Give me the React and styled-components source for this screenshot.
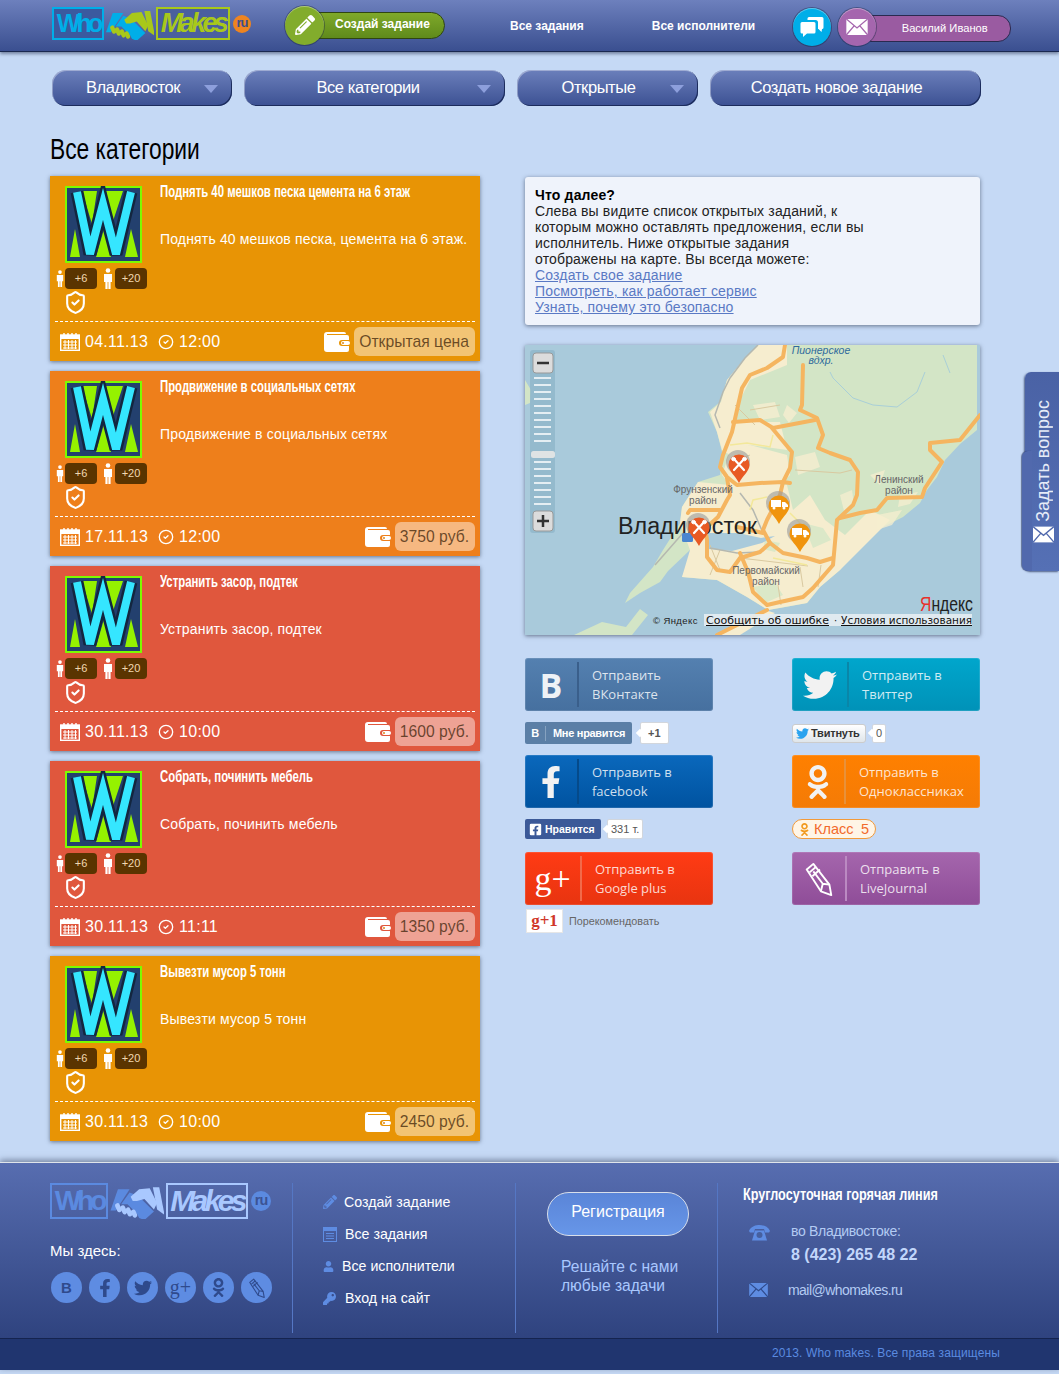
import React from 'react';
import styled, { createGlobalStyle } from 'styled-components';
import { CircleCheck, ShieldCheck } from 'lucide-react';
import {
  FaFacebookF,
  FaKey,
  FaOdnoklassniki,
  FaPencilAlt,
  FaTwitter,
  FaUser,
  FaFacebookSquare,
} from 'react-icons/fa';

const GlobalStyle = createGlobalStyle`
  html, body {
    margin: 0;
    padding: 0;
    background: #c5d9f5;
    font-family: "Liberation Sans", Arial, sans-serif;
  }
  * { box-sizing: border-box; }
`;

const Page = styled.div`
  position: relative;
  width: 1059px;
  height: 1374px;
  overflow: hidden;
  background: #c5d9f5;
`;

// no narrow face is installed, so the PT Sans Narrow headings are squeezed
const Narrow = styled.span`
  display: inline-block;
  transform: scaleX(${(p) => p.$x});
  transform-origin: left center;
  white-space: nowrap;
`;

/* ---------- logo ---------- */

const LogoRow = styled.div`
  display: flex;
  align-items: center;
  gap: ${(p) => p.$gap}px;
  height: ${(p) => p.$h}px;
`;

const LogoBox = styled.div`
  width: ${(p) => p.$w}px;
  height: ${(p) => p.$h}px;
  border: 2px solid ${(p) => p.$color};
  background: ${(p) => p.$bg};
  color: ${(p) => p.$color};
  font-size: ${(p) => p.$size}px;
  font-weight: bold;
  font-style: ${(p) => (p.$italic ? 'italic' : 'normal')};
  letter-spacing: ${(p) => p.$ls}px;
  line-height: ${(p) => p.$h - 5}px;
  text-align: center;
  white-space: nowrap;
`;

const LogoRu = styled.div`
  width: ${(p) => p.$d}px;
  height: ${(p) => p.$d}px;
  margin-left: 1px;
  border-radius: 50%;
  background: ${(p) => p.$bg};
  color: ${(p) => p.$color};
  font-size: ${(p) => p.$d * 0.72}px;
  font-weight: bold;
  letter-spacing: -1px;
  line-height: ${(p) => p.$d - 2}px;
  text-align: center;
`;

const Handshake = ({ left, right, w, h }) => (
  <svg width={w} height={h} viewBox="6 5 50 34">
    <path d="M13 11h11L11 31H6z" fill={left} />
    <path d="M24 14l8 3 15 15-9 8-5-2-2-4-9-9-6 0z" fill={left} />
    <path d="M25 18l8-7 10-1 7 14-3 6-9-10-7 2-4 0z" fill={right} />
    <path d="M46 9h6l5 26-7-5z" fill={right} />
    <g fill={right}>
      <rect x="11" y="24" width="4.5" height="9" rx="2.2" transform="rotate(-25 13 28)" />
      <rect x="16" y="26" width="4.5" height="9" rx="2.2" transform="rotate(-25 18 30)" />
      <rect x="21" y="28" width="4.5" height="9" rx="2.2" transform="rotate(-25 23 32)" />
      <rect x="26" y="30" width="4.5" height="8" rx="2.2" transform="rotate(-25 28 34)" />
    </g>
  </svg>
);

const HeaderLogo = () => (
  <LogoRow $gap={2} $h={33}>
    <LogoBox $w={52} $h={33} $size={25} $ls={-3.8} $color="#00aee8" $bg="#3b5a9f">Who</LogoBox>
    <Handshake left="#00aee8" right="#a8c81a" w={48} h={33} />
    <LogoBox $w={74} $h={33} $size={27} $ls={-3.6} $italic $color="#a8c81a" $bg="#4a5f9f">Makes</LogoBox>
    <LogoRu $d={18} $bg="#ee8420" $color="#3a4f8e">ru</LogoRu>
  </LogoRow>
);

const FooterLogo = () => (
  <LogoRow $gap={2} $h={36}>
    <LogoBox $w={58} $h={36} $size={28} $ls={-4} $color="#5b8ae0" $bg="transparent">Who</LogoBox>
    <Handshake left="#5b8ae0" right="#a9c8ff" w={54} h={36} />
    <LogoBox $w={82} $h={36} $size={30} $ls={-3.6} $italic $color="#a9c8ff" $bg="transparent">Makes</LogoBox>
    <LogoRu $d={20} $bg="#5b8ae0" $color="#3c5394">ru</LogoRu>
  </LogoRow>
);

/* ---------- header ---------- */

const Header = styled.header`
  display: flex;
  align-items: flex-start;
  height: 52px;
  padding: 7px 0 0 52px;
  background: linear-gradient(#6d80bd, #3a4f90);
  border-bottom: 1px solid #1a2950;
  box-shadow: 0 2px 3px rgba(40, 50, 80, 0.5);
`;

const CreateTask = styled.div`
  display: flex;
  align-items: center;
  width: 160px;
  height: 40px;
  margin: -2px 0 0 34px;
`;

const RoundIcon = styled.div`
  position: relative;
  z-index: 1;
  display: flex;
  flex: none;
  align-items: center;
  justify-content: center;
  width: ${(p) => p.$d}px;
  height: ${(p) => p.$d}px;
  border-radius: 50%;
  background: ${(p) => p.$bg};
  color: #fff;
  box-shadow: 0 0 0 1px rgba(30, 40, 70, 0.45), inset 0 1px 0 rgba(255, 255, 255, 0.35);
`;

const CreateLabel = styled.div`
  flex: 1;
  height: 27px;
  margin-left: -10px;
  padding-left: 20px;
  border: 1px solid #2f4512;
  border-radius: 0 14px 14px 0;
  background: linear-gradient(#7fa92a, #5f8a1b);
  color: #fff;
  font-size: 12px;
  font-weight: bold;
  line-height: 23px;
`;

const NavLink = styled.a`
  margin: 12px 0 0 ${(p) => p.$ml}px;
  color: #fff;
  font-size: 12px;
  font-weight: bold;
  line-height: 14px;
  white-space: nowrap;
`;

const UserBlock = styled.div`
  display: flex;
  align-items: flex-start;
  margin: 1px 0 0 ${(p) => p.$ml}px;
`;

const UserName = styled.div`
  width: 141px;
  height: 27px;
  margin: 7px 0 0 -6px;
  padding-left: 8px;
  border: 1px solid #2a2a50;
  border-radius: 0 13px 13px 0;
  background: #9a5ba1;
  color: #fff;
  font-size: 11.2px;
  line-height: 25px;
  text-align: center;
`;

/* ---------- filters ---------- */

const Filters = styled.div`
  display: flex;
  gap: 12px;
  padding: 18px 0 0 52px;
`;

const FilterButton = styled.div`
  position: relative;
  width: ${(p) => p.$w}px;
  height: 36px;
  padding-right: ${(p) => p.$pr}px;
  border-radius: 14px;
  background: linear-gradient(#6b7fbb, #3c5193);
  box-shadow: inset -1px -1px 0 #1c2c5c, inset 1px 1px 0 rgba(255, 255, 255, 0.35);
  color: #fff;
  font-size: 16.5px;
  letter-spacing: -0.4px;
  line-height: 35px;
  text-align: center;
  &::after {
    content: '';
    display: ${(p) => (p.$arrow ? 'block' : 'none')};
    position: absolute;
    top: 15px;
    right: 14px;
    border-top: 8px solid #8d9fdc;
    border-left: 7px solid transparent;
    border-right: 7px solid transparent;
  }
`;

const Title = styled.h1`
  margin: 24px 0 0 50px;
  color: #000;
  font-size: 30px;
  font-weight: normal;
  line-height: 38px;
`;

const Columns = styled.div`
  display: flex;
  gap: 45px;
  margin-top: 8px;
  padding-left: 50px;
`;

/* ---------- task cards ---------- */

const TaskList = styled.div`
  display: flex;
  flex-direction: column;
  gap: 10px;
  width: 430px;
`;

const Card = styled.article`
  height: 185px;
  background: ${(p) => p.$bg};
  box-shadow: 0 1px 4px rgba(40, 50, 70, 0.6);
`;

const CardBody = styled.div`
  display: flex;
  height: 145px;
`;

const CardSide = styled.div`
  flex: none;
  width: 110px;
  padding: 10px 0 0 6px;
`;

const AvatarFrame = styled.div`
  width: 77px;
  height: 77px;
  margin-left: 9px;
`;

const Badges = styled.div`
  display: flex;
  align-items: center;
  margin-top: 5px;
`;

const Badge = styled.span`
  width: 32px;
  height: 21px;
  margin: 0 ${(p) => p.$mr}px 0 1px;
  border-radius: 4px;
  background: #5a3400;
  color: #f2d9b0;
  font-size: 11px;
  line-height: 21px;
  text-align: center;
`;

const Shield = styled.div`
  height: 25px;
  margin: 1px 0 0 7px;
  color: #fff;
`;

const CardText = styled.div`
  flex: 1;
  padding-top: 7px;
  color: #fff;
`;

const CardTitle = styled.h3`
  margin: 0;
  font-size: 16px;
  font-weight: bold;
  line-height: 18px;
`;

const CardDesc = styled.p`
  margin: 29px 0 0;
  font-size: 14px;
  letter-spacing: 0.16px;
  line-height: 18px;
`;

const CardRule = styled.div`
  margin: 0 5px;
  border-top: 1px dashed #fff;
`;

const CardFooter = styled.div`
  display: flex;
  align-items: center;
  height: 39px;
  padding: 0 5px 0 10px;
  color: #fff;
  font-size: 16px;
`;

const DateText = styled.span`
  margin: 0 ${(p) => p.$mr}px 0 5px;
  letter-spacing: 0.25px;
`;

const Price = styled.span`
  display: block;
  height: 29px;
  margin-left: 4px;
  padding: 0 6px 0 5px;
  border-radius: 6px;
  background: rgba(255, 255, 255, 0.45);
  color: rgba(60, 35, 10, 0.75);
  font-size: 15.7px;
  line-height: 29px;
`;

const Spacer = styled.span`
  flex: 1;
`;

const PersonIcon = ({ w }) => (
  <svg width={w} height="21" viewBox="0 0 10 21" fill="#fff">
    <circle cx="5" cy="2.5" r="2.3" />
    <path d="M1 6h8v8H7.6v7H5.4v-7h-.8v7H2.4v-7H1z" />
  </svg>
);

const Calendar = () => (
  <svg width="20" height="18" viewBox="0 0 20 18">
    <rect x="0.7" y="2" width="18.6" height="15.3" fill="none" stroke="#fff" strokeWidth="1.4" />
    <rect x="0.7" y="2" width="18.6" height="4" fill="#fff" />
    <path d="M4 0v3M8 0v3M12 0v3M16 0v3" stroke="#fff" strokeWidth="1.4" />
    <path d="M3 9h14M3 12h14M3 15h14M5 7v9M8.5 7v9M12 7v9M15.5 7v9" stroke="#fff" strokeWidth="1" />
  </svg>
);

const Wallet = () => (
  <svg width="26" height="20" viewBox="0 0 26 20">
    <path d="M3 0h17a2 2 0 0 1 2 2H3v1h20a2 2 0 0 1 2 2v3h-7a3 3 0 0 0 0 6h7v4a2 2 0 0 1-2 2H3a3 3 0 0 1-3-3V3a3 3 0 0 1 3-3z" fill="#fff" />
    <rect x="17" y="9" width="9" height="4" rx="2" fill="#fff" />
    <circle cx="19" cy="11" r="1" fill="#d98a20" />
  </svg>
);

const Avatar = () => (
  <svg width="77" height="77" viewBox="0 0 77 77">
    <rect width="77" height="77" fill="#7dfb00" />
    <rect x="2" y="2" width="73" height="73" fill="#23406e" />
    <g fill="#95f200">
      <path d="M17 5h15l-5 33zM41 5h17l-11 33zM5 71h10l-5-28zM31 71h15l-7-28zM60 71h13l-7-28z" />
    </g>
    <path d="M12 6l13 62 13-50 13 50L66 6" fill="none" stroke="#13263f" strokeWidth="13" />
    <path d="M12 6l13 62 13-50 13 50L66 6" fill="none" stroke="#35e6ff" strokeWidth="8" />
  </svg>
);

const TaskCard = ({ bg, title, text, date, time, price }) => (
  <Card $bg={bg}>
    <CardBody>
      <CardSide>
        <AvatarFrame><Avatar /></AvatarFrame>
        <Badges>
          <PersonIcon w={8} />
          <Badge $mr={5}>+6</Badge>
          <PersonIcon w={12} />
          <Badge $mr={0}>+20</Badge>
        </Badges>
        <Shield><ShieldCheck size={25} strokeWidth={2} /></Shield>
      </CardSide>
      <CardText>
        <CardTitle><Narrow $x={0.71}>{title}</Narrow></CardTitle>
        <CardDesc>{text}</CardDesc>
      </CardText>
    </CardBody>
    <CardRule />
    <CardFooter>
      <Calendar />
      <DateText $mr={10}>{date}</DateText>
      <CircleCheck size={16} strokeWidth={2} />
      <DateText $mr={0}>{time}</DateText>
      <Spacer />
      <Wallet />
      <Price>{price}</Price>
    </CardFooter>
  </Card>
);

const TASKS = [
  { bg: '#e89405', title: 'Поднять 40 мешков песка цемента на 6 этаж', text: 'Поднять 40 мешков песка, цемента на 6 этаж.', date: '04.11.13', time: '12:00', price: 'Открытая цена' },
  { bg: '#ee7f1b', title: 'Продвижение в социальных сетях', text: 'Продвижение в социальных сетях', date: '17.11.13', time: '12:00', price: '3750 руб.' },
  { bg: '#e0573d', title: 'Устранить засор, подтек', text: 'Устранить засор, подтек', date: '30.11.13', time: '10:00', price: '1600 руб.' },
  { bg: '#e0573d', title: 'Собрать, починить мебель', text: 'Собрать, починить мебель', date: '30.11.13', time: '11:11', price: '1350 руб.' },
  { bg: '#e89405', title: 'Вывезти мусор 5 тонн', text: 'Вывезти мусор 5 тонн', date: '30.11.13', time: '10:00', price: '2450 руб.' },
];

/* ---------- right column ---------- */

const Aside = styled.div`
  width: 455px;
  margin-top: 1px;
`;

const InfoBox = styled.div`
  height: 148px;
  padding: 10px 10px 0;
  border-radius: 3px;
  background: #eff3fb;
  box-shadow: 0 1px 4px rgba(40, 50, 70, 0.6);
  color: #222;
  font-size: 14px;
  letter-spacing: 0.16px;
  line-height: 16px;
  b {
    color: #000;
  }
  a {
    display: block;
    color: #5a79c4;
    text-decoration: underline;
  }
`;

const MapFrame = styled.div`
  width: 455px;
  height: 290px;
  margin-top: 20px;
  background: #a9cadb;
  box-shadow: 0 1px 4px rgba(40, 50, 70, 0.6);
  svg {
    display: block;
  }
`;

const Pin = ({ x, y, fill, kind }) => (
  <g transform={`translate(${x} ${y})`}>
    <circle cx="-1" cy="0" r="12" fill="#9a9a9a" opacity="0.6" />
    <path d="M-10.5 3a10.5 10.5 0 1 1 21 0c0 6-7 11-10.5 18C-3.5 14-10.5 9-10.5 3z" fill={fill} />
    {kind === 'tools' ? (
      <g stroke="#fff" strokeWidth="2.2" strokeLinecap="round">
        <path d="M-5-3L5 8M5-3L-5 8" />
        <circle cx="5.5" cy="-3" r="1.8" fill="#fff" strokeWidth="1" />
        <circle cx="-5.5" cy="-3" r="1.8" fill="#fff" strokeWidth="1" />
      </g>
    ) : (
      <g fill="#fff">
        <rect x="-8" y="-3" width="10" height="7" />
        <path d="M3-1h3l3 3v2H3z" />
        <circle cx="-5" cy="5" r="1.5" />
        <circle cx="5" cy="5" r="1.5" />
      </g>
    )}
  </g>
);

const ROADS = [
  'M260 0l-2 12-16 11-17 7-8 13-10 44-9 23-3 12 7 10 10 8 23-2 23-1 7 1',
  'M278 20l-1 40-2 5 17 8 6 17-5 13 12 5 20 7 8 12-1 23-4 10-16 15-4 45-20 23-10 9-23 5-13 3-14-13-5-20-8-19',
  'M455 70l-20 25-30 3v7l12 12-17 26-3 9-35 1-10 12-17 3-20 5',
  'M208 77l27-2 13 8 42-8',
  'M247 83l20 24-2 16-7 14-3 13-13 25-4 10 7 13-10 9-20 6-10 14-13-2-10-13v-17l-2-13',
  'M202 133l3 17-3 5-9 17-11 10',
  'M163 168l2-3h30M212 182l26 6M245 198l13 10 24 5 13 4 13-4M192 290l26-13 24-12',
];

const THIN_ROADS = [
  'M185 200l10 25M215 213l68 8M253 240l3 20M225 225l3 20M275 222l3 20M296 220l-3 22M210 60l20 20M225 65l30-5',
  'M270 125l45 3 12-3M205 118l20-8M195 205l-10 25',
];

const MapView = () => {
  const ticks = [];
  for (let i = 0; i < 19; i++) {
    if (i !== 10) ticks.push(33 + i * 7);
  }
  return (
    <svg width="455" height="290" viewBox="0 0 455 290" fontFamily="Liberation Sans, sans-serif">
      <path d="M0 35l6 10-1 13-5 2zM49 290l28-13 24 5 14-18 8 6-16 20z" fill="#d3e5c6" />
      <path
        d="M233 0L220 13l-18 22-7 22-12 10 9 20 5 20-2 23-22 7-16 25-2 16-17 27-10 17-23 26-5 10 15-10 20-11 8-11 22-21 3 0-8 20-3 7 35 3 30 17 21 13 12-2 27-5 13-16 20-17 13-17 24-23 26-13 17-14 7-13 10-13 8-17 15-16 17-14V0z"
        fill="#d3e5c6"
      />
      <path d="M190 290l50-25 10 3-35 22z" fill="#f6edcf" />
      <g fill="#f6edcf">
        <path d="M233 0L220 13l-18 22-6 22-11 10 7 20 5 18 8 5 5-25 5-30 10-20 37-15V0z" />
        <path d="M205 77h50l7 28-37-5-20 10z" />
        <path d="M205 107l20-7 37 10 3 20-10 10h-50l-8-10z" />
        <path d="M228 60l22-3 5 15-20 3zM262 60l10 8-8 10-6-8zM270 112l20-5 5 15-22 8z" opacity="0.8" />
        <path d="M173 137l32 3h57l6 25 17-15 15 25 20 15 25-25 20 10-25 25-25 25-20 17-13 16-39 7-21-13-30-17-35-3 8-27-10-27 2-16z" />
        <path d="M352 170l25-5-10 15-15 5zM375 150l18-3-8 12-12 3zM315 150l12-5 2 15-10 6zM345 130l15-5-5 15z" opacity="0.75" />
      </g>
      <path d="M228 242l22-4 8 12-18 8zM278 178l20 5 8 12-18 8zM240 195l15 3-5 9-12-3z" fill="#dbe8c8" />
      <path d="M183 188l30 0 23 5 14-2 -13 7-30 8-24-2z" fill="#a9cadb" />

      <g fill="none" stroke="#a9cfd8" strokeWidth="1">
        <path d="M305 27l3 6 20 20 20 7 24 2 20-15 8-20M418 10l7 18" />
      </g>
      <g fill="none" stroke="#d9c9a0" strokeWidth="1">
        {THIN_ROADS.map((d) => <path key={d} d={d} />)}
      </g>
      <g fill="none" stroke="#b5b8b0" strokeWidth="1.5">
        <path d="M233 0L220 13 205 33l-7 14-8 23 5 13M130 220l28-32M185 203l27 5 23-1M215 148l13 17 10 23" />
      </g>
      <g fill="none" stroke="#f3e89a" strokeWidth="1.5">
        <path d="M205 100l17-2 23 4 3-12M225 165l3-10 14-3M265 168l10 10M248 213l34 7" />
      </g>
      <g fill="none" stroke="#f5b560" strokeWidth="4" strokeLinejoin="round" strokeLinecap="round">
        {ROADS.map((d) => <path key={d} d={d} />)}
      </g>

      <g fill="#2f6b9c" fontSize="10.5" fontStyle="italic" textAnchor="middle">
        <text x="296" y="9">Пионерское</text>
        <text x="296" y="19">вдхр.</text>
      </g>
      <g fill="#666" fontSize="10" textAnchor="middle">
        <text x="178" y="148">Фрунзенский</text>
        <text x="178" y="159">район</text>
        <text x="241" y="229">Первомайский</text>
        <text x="241" y="240">район</text>
        <text x="374" y="138">Ленинский</text>
        <text x="374" y="149">район</text>
      </g>
      <text x="93" y="189" fontSize="23" fill="#222" textLength="139" lengthAdjust="spacingAndGlyphs">Владивосток</text>
      <rect x="157" y="188" width="11" height="9" rx="1.5" fill="#4a85d0" />

      <Pin x={214} y={117} fill="#e85a24" kind="tools" />
      <Pin x={174} y={180} fill="#e85a24" kind="tools" />
      <Pin x={254} y={158} fill="#f0940d" kind="truck" />
      <Pin x={275} y={186} fill="#f0940d" kind="truck" />

      <rect x="5" y="5" width="25" height="183" rx="3" fill="#8eb4c8" opacity="0.75" />
      <g stroke="#fff" strokeWidth="1.5">
        {ticks.map((y) => (
          <path key={y} d={`M9 ${y}h17`} />
        ))}
      </g>
      <rect x="6" y="106" width="24" height="7" rx="2.5" fill="#dfe3e4" />
      <rect x="8" y="8" width="20" height="20" rx="3" fill="#dcdcdc" stroke="#999" />
      <path d="M12 18h12" stroke="#333" strokeWidth="2.5" />
      <rect x="8" y="166" width="20" height="20" rx="3" fill="#dcdcdc" stroke="#999" />
      <path d="M12 176h12M18 170v12" stroke="#333" strokeWidth="2.5" />

      <text transform="translate(395 266) scale(0.75 1)" fontSize="21" fill="#222">
        <tspan fill="#e8312a">Я</tspan>ндекс
      </text>
      <rect x="179" y="269" width="268" height="12" fill="#e6edf2" opacity="0.9" />
      <text x="128" y="279" fontSize="9.5" letterSpacing="0.4" fill="#222">© Яндекс</text>
      <g fontSize="10" fill="#111" fontFamily="DejaVu Sans, sans-serif">
        <text x="181" y="279" textLength="123" lengthAdjust="spacingAndGlyphs" textDecoration="underline">Сообщить об ошибке</text>
        <text x="309" y="279">·</text>
        <text x="316" y="279" textLength="131" lengthAdjust="spacingAndGlyphs" textDecoration="underline">Условия использования</text>
      </g>
    </svg>
  );
};

const ShareGrid = styled.div`
  display: grid;
  grid-template-columns: 188px 188px;
  grid-auto-rows: 97px;
  column-gap: 79px;
  margin-top: 23px;
`;

const ShareCell = styled.div`
  display: flex;
  flex-direction: column;
`;

const ShareButton = styled.a`
  display: flex;
  flex: none;
  align-items: center;
  height: 53px;
  border-radius: 3px;
  background: linear-gradient(${(p) => p.$from}, ${(p) => p.$to});
  box-shadow: inset 0 0 0 1px rgba(255, 255, 255, 0.12);
  color: rgba(255, 255, 255, 0.82);
  font-family: "Open Sans", sans-serif;
  font-size: 13px;
  line-height: 19px;
`;

const ShareIcon = styled.div`
  display: flex;
  flex: none;
  align-items: center;
  justify-content: center;
  width: ${(p) => p.$w}px;
  height: 45px;
  margin-right: 13px;
  border-right: 2px solid ${(p) => p.$line};
  color: #f2f2f2;
`;

const VkGlyph = styled.span`
  color: #eef2f6;
  font-size: ${(p) => p.$size}px;
  font-weight: bold;
  line-height: 1;
`;

const GPlusGlyph = styled.span`
  color: #fff;
  font-family: "Liberation Serif", serif;
  font-size: ${(p) => p.$size}px;
  line-height: 1;
  white-space: nowrap;
`;

const WidgetRow = styled.div`
  display: flex;
  align-items: center;
  height: 24px;
  margin-top: ${(p) => p.$mt}px;
`;

const VkLike = styled.div`
  display: flex;
  align-items: center;
  width: 107px;
  height: 22px;
  border-radius: 2px;
  background: #5b7fa6;
  color: #fff;
  font-size: 11px;
  font-weight: bold;
  letter-spacing: -0.3px;
  b {
    width: 21px;
    margin-right: 7px;
    border-right: 1px solid #86a2c0;
    font-size: 11px;
    line-height: 15px;
    text-align: center;
  }
`;

const Count = styled.span`
  position: relative;
  height: ${(p) => p.$h}px;
  margin-left: ${(p) => p.$ml}px;
  padding: 0 ${(p) => p.$pad}px;
  border: 1px solid #d2d6dc;
  border-radius: 2px;
  background: #fff;
  color: #555;
  font-size: 11px;
  font-weight: ${(p) => (p.$bold ? 'bold' : 'normal')};
  line-height: ${(p) => p.$h - 2}px;
  &::before {
    content: '';
    position: absolute;
    top: 50%;
    left: -4px;
    width: 6px;
    height: 6px;
    margin-top: -3px;
    background: #fff;
    transform: rotate(45deg);
  }
`;

const TweetButton = styled.div`
  display: flex;
  align-items: center;
  gap: 2px;
  width: 74px;
  height: 19px;
  padding-left: 3px;
  border: 1px solid #ccc;
  border-radius: 3px;
  background: linear-gradient(#fff, #dfe5ea);
  color: #333;
  font-size: 11px;
  font-weight: bold;
  letter-spacing: -0.2px;
`;

const FbLike = styled.div`
  display: flex;
  align-items: center;
  gap: 3px;
  width: 76px;
  height: 20px;
  padding-left: 4px;
  border-radius: 2px;
  background: #3b5998;
  color: #fff;
  font-size: 10.5px;
  font-weight: bold;
`;

const OkClass = styled.div`
  display: flex;
  align-items: center;
  gap: 3px;
  width: 84px;
  height: 20px;
  padding: 0 6px 0 5px;
  border: 1px solid #f29a3a;
  border-radius: 10px;
  background: #fff5e6;
  color: #f26a2c;
  font-size: 14.5px;
  em {
    margin-left: auto;
    font-style: normal;
  }
`;

const GPlusOne = styled.div`
  width: 37px;
  height: 24px;
  margin-left: 1px;
  border: 1px solid #e6e6e6;
  background: #fff;
  color: #d0372a;
  font-family: "Liberation Serif", serif;
  font-size: 17px;
  font-weight: bold;
  line-height: 21px;
  text-align: center;
`;

const Recommend = styled.span`
  margin-left: 6px;
  color: #666;
  font-size: 10.8px;
`;

const LjIcon = ({ size, color }) => (
  <svg width={size} height={size} viewBox="0 0 30 36" fill="none" stroke={color} strokeWidth="2" strokeLinejoin="round">
    <path d="M2 8l7-6 17 22 2 11-11-4z" />
    <path d="M5 11l7-6M8 15l8-7M17 31l2-8 7 1M19 23l-10-13" />
  </svg>
);

/* ---------- side tab ---------- */

const SideTab = styled.div`
  position: absolute;
  top: 372px;
  right: 0;
  width: 34px;
  height: 199px;
  border-radius: 6px 0 0 6px;
  background: linear-gradient(#4a62a5, #5570b5);
  box-shadow: -1px 1px 2px rgba(30, 45, 90, 0.7);
  &::before {
    content: '';
    position: absolute;
    top: 79px;
    left: -3px;
    width: 10px;
    height: 120px;
    border-radius: 6px 0 0 6px;
    background: #5169ad;
    box-shadow: -1px 0 1px rgba(30, 45, 90, 0.6);
  }
`;

const SideLabel = styled.div`
  position: absolute;
  top: 28px;
  left: 7px;
  color: #e6ecf8;
  font-size: 18px;
  line-height: 22px;
  white-space: nowrap;
  writing-mode: vertical-rl;
  transform: rotate(180deg);
`;

const SideMail = styled.div`
  position: absolute;
  bottom: 24px;
  left: 8px;
`;

const Envelope = ({ w, h, bg, line }) => (
  <svg width={w} height={h} viewBox="0 0 24 18">
    <rect width="24" height="18" fill={bg} />
    <path d="M0 0l12 10L24 0M0 18l9-10.5M24 18l-9-10.5" fill="none" stroke={line} strokeWidth="1.5" />
  </svg>
);

/* ---------- footer ---------- */

const Footer = styled.footer`
  position: absolute;
  top: 1162px;
  left: 0;
  width: 100%;
  border-top: 1px solid #dfe4ea;
  box-shadow: 0 -2px 6px rgba(50, 60, 90, 0.55);
`;

const FooterMain = styled.div`
  display: flex;
  height: 176px;
  background: linear-gradient(#576db0, #2f437f);
  border-bottom: 1px solid #15244f;
`;

const FooterCol = styled.div`
  flex: none;
  width: ${(p) => p.$w}px;
  margin: ${(p) => (p.$first ? '0' : '20px')} 0 ${(p) => (p.$first ? '0' : '5px')};
  padding: ${(p) => p.$pad};
  border-left: ${(p) => (p.$first ? 'none' : '1px solid #5577c4')};
  color: #fff;
`;

const WeAreHere = styled.div`
  margin-top: 23px;
  font-size: 15px;
  line-height: 18px;
`;

const Circles = styled.div`
  display: flex;
  gap: 7px;
  margin: 12px 0 0 1px;
`;

const Circle = styled.div`
  display: flex;
  align-items: center;
  justify-content: center;
  width: 31px;
  height: 31px;
  border-radius: 50%;
  background: #5e8ce2;
  color: #2f4a8c;
  font-size: 15px;
  font-weight: bold;
`;

const CircleSerif = styled.span`
  font-family: "Liberation Serif", serif;
  font-size: 20px;
  font-weight: normal;
`;

const FooterLink = styled.a`
  display: flex;
  align-items: center;
  height: 32px;
  color: #fff;
  font-size: 14.2px;
  svg {
    flex: none;
    margin-right: ${(p) => p.$gap}px;
    color: #5e8ce2;
  }
`;

const Register = styled.div`
  width: 142px;
  height: 44px;
  border: 1px solid #d8dfeb;
  border-radius: 22px;
  background: linear-gradient(#5a85d8, #6796e8);
  color: #fff;
  font-size: 16px;
  line-height: 37px;
  text-align: center;
`;

const Slogan = styled.div`
  margin: 21px 0 0 14px;
  color: #a9c8ff;
  font-size: 15.6px;
  line-height: 19px;
`;

const HotlineTitle = styled.h4`
  margin: 0;
  font-size: 16px;
  font-weight: bold;
  line-height: 18px;
`;

const ContactRow = styled.div`
  display: flex;
  align-items: flex-start;
  margin: ${(p) => p.$mt}px 0 0 6px;
  color: #b3cbf3;
  font-size: 14px;
  letter-spacing: ${(p) => p.$ls}px;
`;

const ContactIcon = styled.div`
  flex: none;
  width: ${(p) => p.$w}px;
  padding-top: ${(p) => p.$pt}px;
  color: #5e8ce2;
`;

const Phone = styled.div`
  margin-top: 7px;
  color: #c2d6fb;
  font-size: 16px;
  font-weight: bold;
  letter-spacing: 0;
`;

const FooterBottom = styled.div`
  height: 31px;
  padding-right: 59px;
  background: #20356f;
  color: #5b8be0;
  font-size: 12px;
  letter-spacing: 0.12px;
  line-height: 29px;
  text-align: right;
`;

const OldPhone = () => (
  <svg width="21" height="16" viewBox="0 0 21 16" fill="currentColor">
    <path d="M0 6C2 1 7 0 10.5 0S19 1 21 6l-1 1.5h-4L15 4H6L5 7.5H1z" />
    <path d="M6 5.5h9l3 10H3z" />
    <circle cx="10.5" cy="10" r="3" fill="#46609f" />
  </svg>
);

const BubblesIcon = () => (
  <svg width="24" height="22" viewBox="0 0 24 22" fill="#fff">
    <path d="M9 1h13a1.5 1.5 0 0 1 1.5 1.5v9A1.5 1.5 0 0 1 22 13l-.5 3-3-3H18V6.5A2.5 2.5 0 0 0 15.5 4H7.5V2.5A1.5 1.5 0 0 1 9 1z" />
    <path d="M2 6h12a1.5 1.5 0 0 1 1.5 1.5V16a1.5 1.5 0 0 1-1.5 1.5H7L3 21v-3.5H2A1.5 1.5 0 0 1 .5 16V7.5A1.5 1.5 0 0 1 2 6z" />
  </svg>
);

const ListIcon = () => (
  <svg width="14" height="15" viewBox="0 0 14 15" fill="none" stroke="currentColor">
    <rect x="0.5" y="0.5" width="13" height="14" />
    <rect x="0.5" y="0.5" width="13" height="3" fill="currentColor" />
    <path d="M3 6.5h8M3 9h8M3 11.5h8" />
  </svg>
);

const App = () => (
  <Page>
    <GlobalStyle />
    <Header>
      <HeaderLogo />
      <CreateTask>
        <RoundIcon $d={39} $bg="#82ac2c">
          <FaPencilAlt size={20} />
        </RoundIcon>
        <CreateLabel>Создай задание</CreateLabel>
      </CreateTask>
      <NavLink $ml={65}>Все задания</NavLink>
      <NavLink $ml={68}>Все исполнители</NavLink>
      <UserBlock $ml={38}>
        <RoundIcon $d={38} $bg="#00aee8">
          <BubblesIcon />
        </RoundIcon>
      </UserBlock>
      <UserBlock $ml={7}>
        <RoundIcon $d={38} $bg="#a566ae">
          <Envelope w={22} h={16} bg="#fff" line="#a566ae" />
        </RoundIcon>
        <UserName>Василий Иванов</UserName>
      </UserBlock>
    </Header>

    <Filters>
      <FilterButton $w={180} $pr={18} $arrow>Владивосток</FilterButton>
      <FilterButton $w={261} $pr={13} $arrow>Все категории</FilterButton>
      <FilterButton $w={181} $pr={18} $arrow>Открытые</FilterButton>
      <FilterButton $w={271} $pr={18}>Создать новое задание</FilterButton>
    </Filters>

    <Title><Narrow $x={0.76}>Все категории</Narrow></Title>

    <Columns>
      <TaskList>
        {TASKS.map((task) => (
          <TaskCard key={task.title} {...task} />
        ))}
      </TaskList>

      <Aside>
        <InfoBox>
          <b>Что далее?</b>
          <br />
          Слева вы видите список открытых заданий, к
          <br />
          которым можно оставлять предложения, если вы
          <br />
          исполнитель. Ниже открытые задания
          <br />
          отображены на карте. Вы всегда можете:
          <a>Создать свое задание</a>
          <a>Посмотреть, как работает сервис</a>
          <a>Узнать, почему это безопасно</a>
        </InfoBox>

        <MapFrame>
          <MapView />
        </MapFrame>

        <ShareGrid>
          <ShareCell>
            <ShareButton $from="#5480b0" $to="#46709f">
              <ShareIcon $w={54} $line="#3a5f8b"><VkGlyph $size={34}>B</VkGlyph></ShareIcon>
              <span>Отправить<br />ВКонтакте</span>
            </ShareButton>
            <WidgetRow $mt={10}>
              <VkLike><b>B</b>Мне нравится</VkLike>
              <Count $h={22} $ml={8} $pad={7} $bold>+1</Count>
            </WidgetRow>
          </ShareCell>
          <ShareCell>
            <ShareButton $from="#00a6cc" $to="#0092b8">
              <ShareIcon $w={57} $line="#0a86a8"><FaTwitter size={34} /></ShareIcon>
              <span>Отправить в<br />Твиттер</span>
            </ShareButton>
            <WidgetRow $mt={10}>
              <TweetButton><FaTwitter size={13} color="#2aa3ef" />Твитнуть</TweetButton>
              <Count $h={19} $ml={6} $pad={3}>0</Count>
            </WidgetRow>
          </ShareCell>
          <ShareCell>
            <ShareButton $from="#0a68bc" $to="#0053a0">
              <ShareIcon $w={54} $line="#054a8a"><FaFacebookF size={32} /></ShareIcon>
              <span>Отправить в<br />facebook</span>
            </ShareButton>
            <WidgetRow $mt={9}>
              <FbLike><FaFacebookSquare size={13} />Нравится</FbLike>
              <Count $h={20} $ml={6} $pad={3}>331 т.</Count>
            </WidgetRow>
          </ShareCell>
          <ShareCell>
            <ShareButton $from="#ff8000" $to="#f47b06">
              <ShareIcon $w={54} $line="#e8913a"><FaOdnoklassniki size={34} /></ShareIcon>
              <span>Отправить в<br />Одноклассниках</span>
            </ShareButton>
            <WidgetRow $mt={9}>
              <OkClass>
                <FaOdnoklassniki size={13} color="#f29a1f" />
                <span>Класс</span>
                <em>5</em>
              </OkClass>
            </WidgetRow>
          </ShareCell>
          <ShareCell>
            <ShareButton $from="#ff3b14" $to="#e83410">
              <ShareIcon $w={57} $line="#f26a4a"><GPlusGlyph $size={34}>g+</GPlusGlyph></ShareIcon>
              <span>Отправить в<br />Google plus</span>
            </ShareButton>
            <WidgetRow $mt={4}>
              <GPlusOne>g+1</GPlusOne>
              <Recommend>Порекомендовать</Recommend>
            </WidgetRow>
          </ShareCell>
          <ShareCell>
            <ShareButton $from="#a566ad" $to="#8f4d98">
              <ShareIcon $w={55} $line="#bb8ac2"><LjIcon size={34} color="#fff" /></ShareIcon>
              <span>Отправить в<br />LiveJournal</span>
            </ShareButton>
          </ShareCell>
        </ShareGrid>
      </Aside>
    </Columns>

    <SideTab>
      <SideLabel>Задать вопрос</SideLabel>
      <SideMail>
        <Envelope w={21} h={17} bg="#fff" line="#5169ad" />
      </SideMail>
    </SideTab>

    <Footer>
      <FooterMain>
        <FooterCol $w={292} $first $pad="20px 0 0 50px">
          <FooterLogo />
          <WeAreHere>Мы здесь:</WeAreHere>
          <Circles>
            <Circle>B</Circle>
            <Circle><FaFacebookF size={18} /></Circle>
            <Circle><FaTwitter size={18} /></Circle>
            <Circle><CircleSerif>g+</CircleSerif></Circle>
            <Circle><FaOdnoklassniki size={19} /></Circle>
            <Circle><LjIcon size={20} color="#2f4a8c" /></Circle>
          </Circles>
        </FooterCol>
        <FooterCol $w={223} $pad="3px 0 0 30px">
          <FooterLink $gap={7}><FaPencilAlt size={14} />Создай задание</FooterLink>
          <FooterLink $gap={8}><ListIcon />Все задания</FooterLink>
          <FooterLink $gap={8}><FaUser size={11} />Все исполнители</FooterLink>
          <FooterLink $gap={9}><FaKey size={13} />Вход на сайт</FooterLink>
        </FooterCol>
        <FooterCol $w={202} $pad="9px 0 0 31px">
          <Register>Регистрация</Register>
          <Slogan>Решайте с нами<br />любые задачи</Slogan>
        </FooterCol>
        <FooterCol $w={342} $pad="3px 0 0 25px">
          <HotlineTitle><Narrow $x={0.79}>Круглосуточная горячая линия</Narrow></HotlineTitle>
          <ContactRow $mt={19} $ls={-0.3}>
            <ContactIcon $w={42} $pt={2}><OldPhone /></ContactIcon>
            <div>
              во Владивостоке:
              <Phone>8 (423) 265 48 22</Phone>
            </div>
          </ContactRow>
          <ContactRow $mt={18} $ls={-0.55}>
            <ContactIcon $w={39} $pt={1}><Envelope w={19} h={14} bg="#5e8ce2" line="#2f4a8c" /></ContactIcon>
            <div>mail@whomakes.ru</div>
          </ContactRow>
        </FooterCol>
      </FooterMain>
      <FooterBottom>2013. Who makes. Все права защищены</FooterBottom>
    </Footer>
  </Page>
);

export default App;
